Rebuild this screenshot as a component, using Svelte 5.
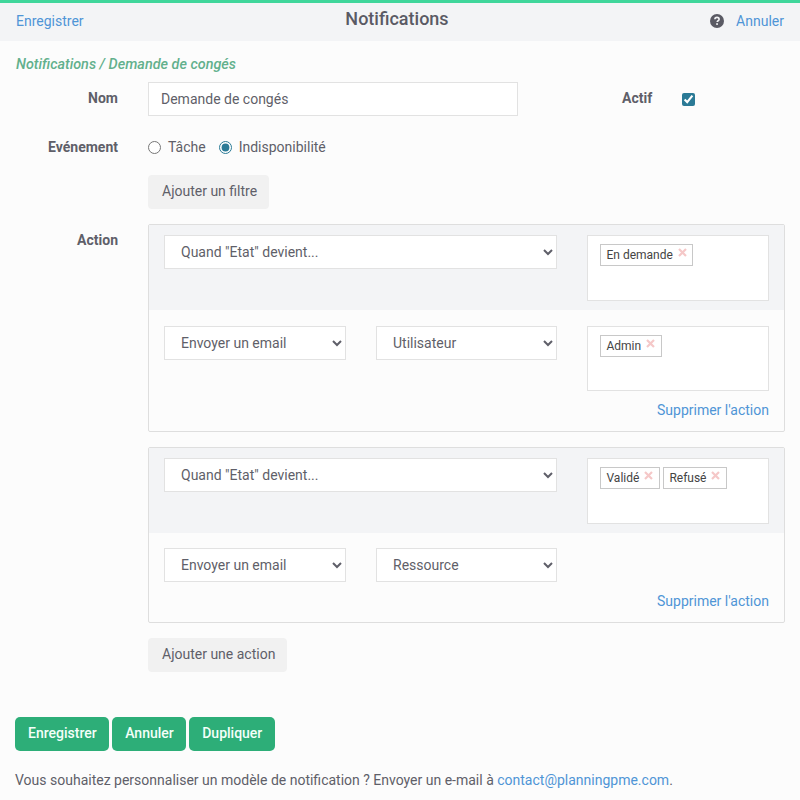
<script lang="ts">
    // One block per action: condition row on grey, then the action row
    const actions = [
        { tags: ['En demande'], kind: 'Envoyer un email', target: 'Utilisateur', targetTags: ['Admin'] },
        { tags: ['Validé', 'Refusé'], kind: 'Envoyer un email', target: 'Ressource', targetTags: null }
    ];

    let name = $state('Demande de congés');
    let active = $state(true);
    let eventType = $state('indispo');
</script>

{#snippet tagList(tags)}
    {#each tags as tag}
        <span class="tag">
            {tag}
            <svg class="remove" width="9" height="9" viewBox="0 0 9 9" aria-hidden="true">
                <path d="M1 1l7 7M8 1L1 8" fill="none" stroke="#f5c8c8" stroke-width="2.2" />
            </svg>
        </span>
    {/each}
{/snippet}

<div class="page">
    <header class="topbar">
        <a href="#save" class="link">Enregistrer</a>
        <h1>Notifications</h1>
        <div class="topbar-right">
            <svg class="help" width="14" height="14" viewBox="0 0 14 14" aria-hidden="true">
                <circle cx="7" cy="7" r="7" fill="#5a5a64" />
                <path d="M4.9 5.3c0-1.2 1-1.9 2.1-1.9s2.1.7 2.1 1.8c0 1.6-1.9 1.5-1.9 2.8" fill="none" stroke="#f3f4f6" stroke-width="1.6" />
                <rect x="6.2" y="9.2" width="1.7" height="1.7" fill="#f3f4f6" />
            </svg>
            <a href="#cancel" class="link">Annuler</a>
        </div>
    </header>

    <main class="content">
        <p class="crumb">Notifications / Demande de congés</p>

        <div class="row row-name">
            <span class="label">Nom</span>
            <input class="text-input" type="text" bind:value={name} />
            <span class="label label-active">Actif</span>
            <input class="check" type="checkbox" bind:checked={active} />
        </div>

        <div class="row row-event">
            <span class="label">Evénement</span>
            <label class="radio"><input type="radio" value="tache" bind:group={eventType} />Tâche</label>
            <label class="radio"><input type="radio" value="indispo" bind:group={eventType} />Indisponibilité</label>
        </div>

        <div class="row row-filter">
            <span class="label"></span>
            <button class="btn-grey">Ajouter un filtre</button>
        </div>

        <div class="row row-action">
            <span class="label">Action</span>
            <div class="actions">
                {#each actions as action}
                    <section class="action">
                        <div class="when">
                            <select class="select select-wide">
                                <option>Quand "Etat" devient...</option>
                            </select>
                            <div class="tagbox">
                                {@render tagList(action.tags)}
                            </div>
                        </div>
                        <div class="then">
                            <div class="then-row">
                                <select class="select select-kind"><option>{action.kind}</option></select>
                                <select class="select select-target"><option>{action.target}</option></select>
                                {#if action.targetTags}
                                    <div class="tagbox tagbox-then">
                                        {@render tagList(action.targetTags)}
                                    </div>
                                {/if}
                            </div>
                            <a href="#remove" class="link remove-action">Supprimer l'action</a>
                        </div>
                    </section>
                {/each}
                <button class="btn-grey">Ajouter une action</button>
            </div>
        </div>

        <div class="buttons">
            <button class="btn-green">Enregistrer</button>
            <button class="btn-green">Annuler</button>
            <button class="btn-green">Dupliquer</button>
        </div>

        <p class="footnote">
            Vous souhaitez personnaliser un modèle de notification ? Envoyer un e-mail à
            <a href="mailto:contact@planningpme.com" class="link">contact@planningpme.com</a>.
        </p>
    </main>
</div>

<style>
    :global(body) {
        margin: 0;
        background: #fcfcfc;
    }

    .page {
        font-family: Roboto, sans-serif;
        font-size: 14px;
        color: #5f5f69;
        height: 800px;
        overflow: hidden;
    }

    .link {
        color: #4f95d6;
        text-decoration: none;
    }

    .topbar {
        display: grid;
        grid-template-columns: 1fr auto 1fr;
        align-items: center;
        box-sizing: content-box;
        height: 36px;
        padding: 0 16px 2px;
        border-top: 3px solid #3fd69b;
        background: #f3f4f6;
    }

    .topbar h1 {
        margin: 0;
        padding: 0 6px 6px 0;
        font-size: 18px;
        font-weight: 500;
        color: #5a5a64;
    }

    .topbar-right {
        display: flex;
        justify-content: flex-end;
        align-items: center;
        gap: 12px;
    }

    .content {
        padding: 16px 15px 0;
    }

    .crumb {
        margin: 0 0 9px;
        padding-left: 1px;
        height: 16px;
        line-height: 16px;
        font-size: 14.4px;
        font-style: italic;
        font-weight: 500;
        color: #62b08c;
    }

    .row {
        display: flex;
    }

    .label {
        flex: none;
        width: 103px;
        margin-right: 30px;
        text-align: right;
        font-weight: 700;
    }

    .row-name {
        align-items: center;
        height: 34px;
    }

    .row-name .label {
        position: relative;
        top: -1px;
    }

    .text-input {
        box-sizing: border-box;
        width: 370px;
        height: 34px;
        padding: 0 12px;
        border: 1px solid #e2e2e2;
        background: #fff;
        font: inherit;
        color: inherit;
        outline: none;
    }

    .label-active {
        width: auto;
        margin: 0 30px 0 104px;
    }

    .check {
        width: 13px;
        height: 13px;
        margin: 0;
        accent-color: #2b7a96;
    }

    .row-event {
        align-items: center;
        margin-top: 14px;
        height: 34px;
    }

    .radio {
        display: flex;
        align-items: center;
        gap: 7px;
        margin-right: 13px;
    }

    .radio input {
        width: 13px;
        height: 13px;
        margin: 1px 0 0;
        accent-color: #2b7a96;
    }

    .row-filter {
        margin-top: 11px;
    }

    .btn-grey {
        height: 34px;
        padding: 0 12px 2px 14px;
        border: 0;
        border-radius: 4px;
        background: #f1f1f1;
        font: inherit;
        color: inherit;
    }

    .row-action {
        margin-top: 15px;
    }

    .row-action > .label {
        padding-top: 8px;
    }

    .actions {
        display: flex;
        flex-direction: column;
        align-items: flex-start;
        width: 637px;
    }

    .action {
        box-sizing: border-box;
        width: 100%;
        margin-bottom: 15px;
        border: 1px solid #dedede;
        border-radius: 2px;
    }

    .when {
        display: flex;
        justify-content: space-between;
        align-items: flex-start;
        height: 85px;
        padding: 10px 15px 0;
        box-sizing: border-box;
        background: #f3f4f6;
    }

    .then {
        padding: 15.5px 15px 12.5px;
    }

    .then-row {
        display: flex;
        align-items: flex-start;
    }

    .select {
        box-sizing: border-box;
        height: 34px;
        padding-left: 12px;
        border: 1px solid #e2e2e2;
        background-color: #fff;
        font: inherit;
        color: inherit;
        outline: none;
    }

    .select-wide {
        width: 393px;
    }

    .select-kind {
        width: 182px;
        margin-right: 30px;
    }

    .select-target {
        width: 181px;
        margin-right: 30px;
    }

    .tagbox {
        box-sizing: border-box;
        display: flex;
        align-items: flex-start;
        gap: 3px;
        width: 182px;
        height: 66px;
        padding: 8px 12px;
        border: 1px solid #e2e2e2;
        background: #fff;
    }

    .tagbox-then {
        height: 65.5px;
    }

    .tag {
        display: inline-flex;
        align-items: center;
        box-sizing: border-box;
        height: 22px;
        padding: 0 5.5px;
        border: 1px solid #c8c8c8;
        font-size: 12px;
        color: #444;
    }

    .remove {
        margin: -5px 0 0 5px;
    }

    .remove-action {
        display: block;
        margin-top: 11px;
        text-align: right;
    }

    .buttons {
        display: flex;
        gap: 3px;
        margin-top: 45px;
    }

    .btn-green {
        height: 34px;
        padding: 0 12.5px 2px 13px;
        border: 0;
        border-radius: 5px;
        background: #2dae78;
        font: inherit;
        font-weight: 500;
        color: #f4fff9;
    }

    .footnote {
        margin: 21px 0 0;
    }
</style>
